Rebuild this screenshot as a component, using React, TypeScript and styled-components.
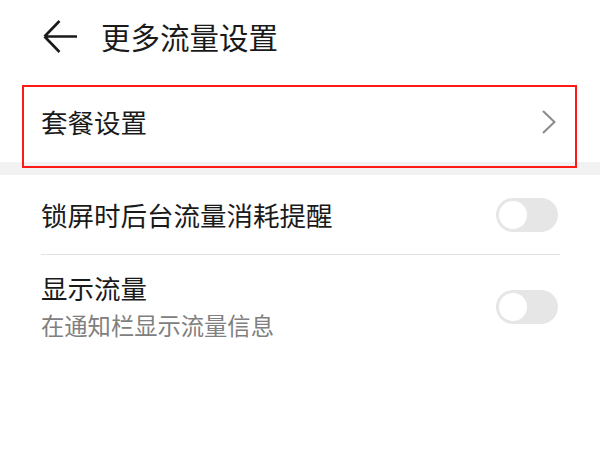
import React from "react";
import styled, { createGlobalStyle } from "styled-components";

const Global = createGlobalStyle`
  html, body { margin: 0; padding: 0; background: #ffffff; }
  body { font-family: "Noto Sans CJK SC", "Noto Sans", sans-serif; color: #1a1a1a; }
`;

const Page = styled.div`
  width: 600px;
  display: flex;
  flex-direction: column;
`;

const Header = styled.header`
  height: 72px;
  display: flex;
  align-items: center;
  padding-left: 42px;
  gap: 23px;
`;

const BackButton = styled.button`
  width: 36px;
  height: 36px;
  padding: 0;
  border: none;
  background: none;
  display: flex;
  align-items: center;
  justify-content: center;
`;

const Title = styled.h1`
  margin: 0;
  font-size: 29.5px;
  font-weight: 400;
  line-height: 36px;
  color: #1a1a1a;
`;

const LinkRow = styled.div`
  position: relative;
  height: 90px;
  padding: 10px 44px 0 41px;
  box-sizing: border-box;
  display: flex;
  align-items: center;
  justify-content: space-between;
`;

const Highlight = styled.div`
  position: absolute;
  left: 22px;
  right: 23px;
  top: 13px;
  bottom: -6px;
  border: 2px solid #ff1a1a;
  z-index: 2;
  pointer-events: none;
`;

const RowText = styled.span`
  font-size: 26.5px;
  line-height: 36px;
  color: #1a1a1a;
`;

const Band = styled.div`
  height: 13px;
  background: #f2f2f2;
`;

const SwitchRow = styled.div<{ $tall?: boolean }>`
  display: flex;
  align-items: center;
  justify-content: space-between;
  padding: ${(p) => (p.$tall ? "15px 42px 7px 41px" : "0 42px 0 41px")};
  height: ${(p) => (p.$tall ? "96px" : "79px")};
  box-sizing: border-box;
`;

const TextCol = styled.div`
  display: flex;
  flex-direction: column;
`;

const SubText = styled.span`
  font-size: 23.3px;
  line-height: 38px;
  color: #808080;
`;

const Divider = styled.div`
  height: 1px;
  background: #e3e3e3;
  margin: 0 40px 0 41px;
`;

const Track = styled.div`
  width: 62px;
  height: 34px;
  border-radius: 17px;
  background: #e6e6e6;
  position: relative;
  flex-shrink: 0;
`;

const Knob = styled.div`
  position: absolute;
  left: 3px;
  top: 3px;
  width: 28px;
  height: 28px;
  border-radius: 50%;
  background: #ffffff;
`;

const Toggle = () => (
  <Track>
    <Knob />
  </Track>
);

export default function App() {
  return (
    <Page>
      <Global />
      <Header>
        <BackButton aria-label="返回">
          <svg width="36" height="36" viewBox="0 0 36 36">
            <path
              d="M2.5 18.5 L17.5 3 M2.5 18.5 L17.5 34 M2.5 18.5 L35 18.5"
              stroke="#1a1a1a"
              strokeWidth="2.6"
              fill="none"
            />
          </svg>
        </BackButton>
        <Title>更多流量设置</Title>
      </Header>
      <LinkRow>
        <RowText>套餐设置</RowText>
        <svg width="14" height="24" viewBox="0 0 14 24">
          <polyline points="1,1 12.5,12 1,23" stroke="#8a8a8a" strokeWidth="2" fill="none" />
        </svg>
        <Highlight />
      </LinkRow>
      <Band />
      <SwitchRow>
        <RowText>锁屏时后台流量消耗提醒</RowText>
        <Toggle />
      </SwitchRow>
      <Divider />
      <SwitchRow $tall>
        <TextCol>
          <RowText>显示流量</RowText>
          <SubText>在通知栏显示流量信息</SubText>
        </TextCol>
        <Toggle />
      </SwitchRow>
    </Page>
  );
}
